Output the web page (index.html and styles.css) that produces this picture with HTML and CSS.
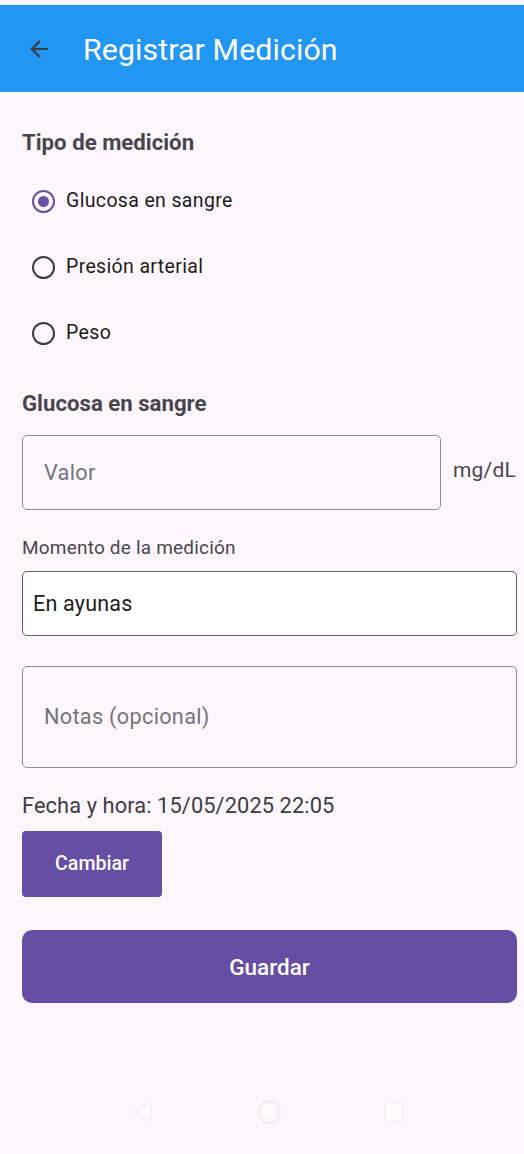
FILE: index.html
```html
<!DOCTYPE html>
<html lang="es">
<head>
<meta charset="utf-8">
<link rel="stylesheet" href="styles.css">
</head>
<body>
<div class="screen">
  <div class="status"></div>
  <header class="appbar">
    <svg class="back" width="24" height="24" viewBox="0 0 24 24"><path d="M20 11H7.83l5.59-5.59L12 4l-8 8 8 8 1.41-1.41L7.83 13H20v-2z" fill="#3c3a44"/></svg>
    <h1 class="title">Registrar Medición</h1>
  </header>
  <main class="content">
    <h2 class="section">Tipo de medición</h2>
    <div class="radios">
      <div class="radio-row"><span class="radio checked"></span><span class="radio-label">Glucosa en sangre</span></div>
      <div class="radio-row"><span class="radio"></span><span class="radio-label">Presión arterial</span></div>
      <div class="radio-row"><span class="radio"></span><span class="radio-label">Peso</span></div>
    </div>
    <h2 class="section section-2">Glucosa en sangre</h2>
    <div class="value-row">
      <div class="field field-value"><span class="placeholder">Valor</span></div>
      <span class="unit">mg/dL</span>
    </div>
    <div class="label">Momento de la medición</div>
    <div class="dropdown">En ayunas</div>
    <div class="field field-notes"><span class="placeholder">Notas (opcional)</span></div>
    <div class="datetime">Fecha y hora: 15/05/2025 22:05</div>
    <button class="btn btn-small">Cambiar</button>
    <button class="btn btn-wide">Guardar</button>
  </main>
  <nav class="navbar">
    <svg width="24" height="26" viewBox="0 0 24 26"><path d="M20 3 L20 22 L4 13 Z" fill="#fefcfe" stroke="#efeaf0" stroke-width="1.2"/></svg>
    <svg width="28" height="28" viewBox="0 0 28 28"><circle cx="14" cy="14" r="11" fill="none" stroke="#efeaf0" stroke-width="2"/><circle cx="14" cy="13" r="8" fill="#fefcfe" stroke="#f2eef3" stroke-width="1"/></svg>
    <svg width="24" height="24" viewBox="0 0 24 24"><rect x="3" y="3" width="18" height="18" rx="3" fill="#fefcfe" stroke="#efeaf0" stroke-width="1.2"/></svg>
  </nav>
</div>
</body>
</html>
```
FILE: styles.css
```css
* { box-sizing: border-box; }
html, body { margin: 0; padding: 0; }
body {
  background: #fdf7fd;
  font-family: Roboto, "Noto Sans", sans-serif;
  color: #1d1b20;
}
.screen {
  width: 524px;
  height: 1154px;
  display: flex;
  flex-direction: column;
  background: #fdf7fd;
}
.status { height: 5px; background: #fdf7fd; }
.appbar {
  height: 87px;
  background: #2196f3;
  display: flex;
  align-items: center;
  padding-left: 26px;
}
.back { width: 26px; height: 26px; }
.title {
  margin: 2px 0 0 31px;
  font-size: 30.3px;
  font-weight: 400;
  color: #ffffff;
  letter-spacing: 0.1px;
}
.content {
  flex: 1;
  padding: 0 7px 0 22px;
  display: flex;
  flex-direction: column;
}
.section {
  margin: 0;
  font-size: 22.2px;
  font-weight: 700;
  color: #49454f;
  line-height: 24px;
}
.content > .section:first-child { margin-top: 38px; }
.radios {
  margin-top: 14px;
  display: flex;
  flex-direction: column;
}
.radio-row {
  height: 66px;
  display: flex;
  align-items: center;
  padding-left: 10px;
}
.radio {
  width: 23px;
  height: 23px;
  border: 2.5px solid #3d3a43;
  border-radius: 50%;
  display: flex;
  align-items: center;
  justify-content: center;
  flex-shrink: 0;
}
.radio.checked { border-color: #6750a4; }
.radio.checked::after {
  content: "";
  width: 11px;
  height: 11px;
  border-radius: 50%;
  background: #6750a4;
}
.radio-label {
  margin-left: 11px;
  font-size: 19.5px;
  letter-spacing: 0.35px;
  color: #1d1b20;
  line-height: 24px;
}
.section-2 { margin-top: 25px; }
.value-row {
  margin-top: 20px;
  display: flex;
  align-items: center;
}
.field {
  border: 1.3px solid #8e8a93;
  border-radius: 5px;
  display: flex;
  align-items: center;
  padding-left: 21px;
}
.field-value { width: 419px; height: 75px; }
.placeholder {
  font-size: 21.7px;
  color: #76727b;
  letter-spacing: 0.3px;
  line-height: 24px;
}
.unit {
  margin-left: 12px;
  margin-top: -6px;
  font-size: 21px;
  color: #49454f;
  letter-spacing: 0.2px;
  line-height: 24px;
}
.label {
  margin-top: 26px;
  font-size: 19px;
  color: #49454f;
  letter-spacing: 0.2px;
  line-height: 24px;
}
.dropdown {
  margin-top: 11px;
  height: 65px;
  background: #ffffff;
  border: 1.3px solid #605c66;
  border-radius: 5px;
  display: flex;
  align-items: center;
  padding-left: 10px;
  font-size: 21.5px;
  color: #1d1b20;
  letter-spacing: 0.2px;
}
.field-notes {
  margin-top: 30px;
  height: 102px;
}
.datetime {
  margin-top: 26px;
  font-size: 21.8px;
  color: #3f3b44;
  line-height: 24px;
  letter-spacing: 0.1px;
}
.btn {
  border: none;
  background: #654ea3;
  color: #ffffff;
  font-family: Roboto, "Noto Sans", sans-serif;
  font-weight: 500;
  cursor: pointer;
  line-height: 24px;
}
.btn-small {
  margin-top: 13px;
  width: 140px;
  height: 66px;
  border-radius: 4px;
  font-size: 19.6px;
  align-self: flex-start;
}
.btn-wide {
  margin-top: 33px;
  height: 73px;
  border-radius: 10px;
  font-size: 22.5px;
  width: 495px;
}
.navbar {
  height: 60px;
  margin-bottom: 12px;
  display: flex;
  align-items: center;
  justify-content: space-between;
  padding: 0 118px 0 131px;
}
```
